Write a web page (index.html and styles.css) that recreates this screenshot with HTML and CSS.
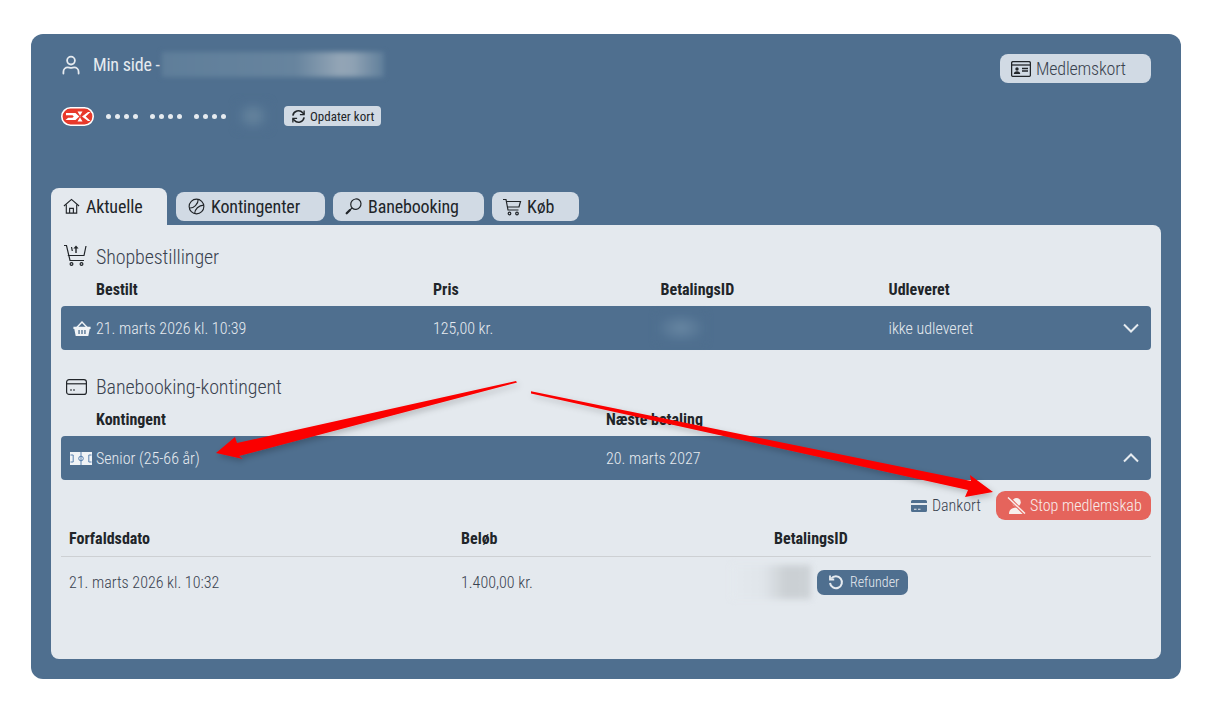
FILE: index.html
```html
<!DOCTYPE html>
<html lang="da">
<head>
<meta charset="utf-8">
<title>Min side</title>
<link rel="stylesheet" href="styles.css">
</head>
<body>
<main class="card">
  <header class="head">
    <div class="head-top">
      <div class="title">
        <svg class="ico-user" viewBox="0 0 20 20" fill="none" stroke="currentColor" stroke-width="1.800"><circle cx="10" cy="5.600" r="3.900"/><path d="M2.400 18.600v-1.600c0-3 2.200-4.600 4.400-4.600 1.200 0 1.800.5 3.200.5s2-.5 3.200-.5c2.200 0 4.400 1.600 4.400 4.600v1.600" stroke-linecap="round"/></svg>
        <span>Min side -</span>
        <span class="blur blur-name"></span>
      </div>
      <button class="btn-member">
        <svg class="ico-id" viewBox="0 0 20 16" fill="none" stroke="currentColor" stroke-width="1.300"><rect x=".6" y=".6" width="18.800" height="14.800" rx="1.500"/><path d="M.6 4h18.800"/><circle cx="6" cy="8" r="1.700" fill="currentColor" stroke="none"/><path d="M2.800 13c0-2 1.400-2.800 3.200-2.800s3.200.8 3.200 2.800z" fill="currentColor" stroke="none"/><path d="M11 7.500h6M11 10h6"/></svg>
        Medlemskort
      </button>
    </div>
    <div class="head-pay">
      <svg class="ico-dk" viewBox="0 0 33 19"><rect x=".8" y=".8" width="31.400" height="17.400" rx="8.700" fill="#e8392b" stroke="#fff" stroke-width="1.600"/><path d="M5 6h9.500l3.800 3.500-3.800 3.500H4.500l2.700-2.300h4.300l1.300-1.200-1.300-1.200H5z" fill="#fff"/><path d="M16.500 4.500h5L18.800 9l.6.5-.6.5 2.700 4.500h-5l3-5z" fill="#fff"/><path d="M21 9.500L27 5h2.500l-4.800 4.500 4.800 4.500H27z" fill="#fff"/></svg>
      <span class="dots"><i></i><i></i><i></i><i></i></span>
      <span class="dots"><i></i><i></i><i></i><i></i></span>
      <span class="dots"><i></i><i></i><i></i><i></i></span>
      <span class="blur blur-last"></span>
      <button class="btn-update">
        <svg class="ico-sync" viewBox="0 0 16 16" fill="none" stroke="currentColor" stroke-width="1.700"><path d="M2 7a6 6 0 0 1 10.500-3l1.500 1.500"/><path d="M14 1.500v4.500H9.500" stroke-width="1.400"/><path d="M14 9a6 6 0 0 1-10.500 3L2 10.500"/><path d="M2 14.500V10h4.500" stroke-width="1.400"/></svg>
        Opdater kort
      </button>
    </div>
  </header>

  <nav class="tabs">
    <a class="tab tab-active">
      <svg class="ico-tab" viewBox="0 0 18 18" fill="none" stroke="currentColor" stroke-width="1.200"><path d="M1 8.500L9 1.500l8 7"/><path d="M3.500 7v9h11V7"/><path d="M7 16v-5h4v5"/></svg>
      Aktuelle
    </a>
    <a class="tab tab-k">
      <svg class="ico-tab" viewBox="0 0 18 18" fill="none" stroke="currentColor" stroke-width="1.200"><circle cx="9" cy="9" r="7.800"/><path d="M1.500 10.500C6 11 11 6.500 10.800 1.400M7 16.600C7 12 11.500 7.500 16.600 7.500"/></svg>
      Kontingenter
    </a>
    <a class="tab tab-b">
      <svg class="ico-tab" viewBox="0 0 18 18" fill="none" stroke="currentColor" stroke-width="1.300"><ellipse cx="11.500" cy="6.500" rx="5.300" ry="5.600" transform="rotate(40 11.500 6.500)"/><path d="M7.500 10.500L5 13"/><path d="M5 13L1.800 16.200" stroke-width="2.400" stroke-linecap="round"/></svg>
      Banebooking
    </a>
    <a class="tab tab-c">
      <svg class="ico-cart" viewBox="0 0 20 18" fill="none" stroke="currentColor" stroke-width="1.200"><path d="M1 1.500h3l2 10.500h10.500"/><path d="M4.500 3.500H18.500l-1.500 5.500H5.500"/><circle cx="7.500" cy="15.500" r="1.300"/><circle cx="15" cy="15.500" r="1.300"/></svg>
      Køb
    </a>
  </nav>

  <section class="panel">
    <h2 class="sec-title">
      <svg class="ico-sec-cart" viewBox="0 0 24 22" fill="none" stroke="currentColor" stroke-width="1.200"><path d="M1 1.500h2.500L7 16.500h14"/><path d="M4.800 11.500H21L23 2"/><path d="M13 9V3.500" stroke-width="1.400"/><path d="M10.400 4.500L13 1.500l2.600 3z" fill="currentColor" stroke="none"/><path d="M8.500 3l.8 4"/><circle cx="8.500" cy="20" r="1.400"/><circle cx="18.500" cy="20" r="1.400"/></svg>
      Shopbestillinger
    </h2>
    <div class="cols cols-shop">
      <span>Bestilt</span><span>Pris</span><span>BetalingsID</span><span>Udleveret</span>
    </div>
    <div class="row row-shop">
      <svg class="ico-basket" viewBox="0 0 18 15"><path d="M3.800 6.500L9 1l5.200 5.500" fill="none" stroke="#f0f3f6" stroke-width="1.400"/><path d="M.4 5.800h17.200v2.200h-.9L15.300 15H2.700L1.300 8H.4z" fill="#f0f3f6"/><path d="M5.400 9h1.300v4H5.400zM8.350 9h1.300v4h-1.300zM11.300 9h1.300v4h-1.300z" fill="#4f6f8f"/></svg>
      <span>21. marts 2026 kl. 10:39</span>
      <span>125,00 kr.</span>
      <span class="blur blur-pay1"></span>
      <span>ikke udleveret</span>
      <svg class="chev" viewBox="0 0 16 10" fill="none" stroke="currentColor" stroke-width="2"><path d="M1 1.500l7 7 7-7"/></svg>
    </div>

    <h2 class="sec-title sec-title-2">
      <svg class="ico-sec-card" viewBox="0 0 21 16" fill="none" stroke="currentColor" stroke-width="1.200"><rect x=".6" y=".6" width="19.800" height="14.800" rx="2.500"/><path d="M.6 4.800h19.800"/><path d="M4 11h2M7 11h2"/></svg>
      Banebooking-kontingent
    </h2>
    <div class="cols cols-sub">
      <span>Kontingent</span><span>Næste betaling</span>
    </div>
    <div class="row row-sub">
      <svg class="ico-court" viewBox="0 0 22 13"><rect width="22" height="13" fill="#f0f3f6"/><g fill="none" stroke="#4a76a8" stroke-width=".9"><circle cx="11" cy="6.500" r="2.300"/><path d="M11 0v13M.5 3h2.700v7H.5M21.500 3h-2.700v7h2.700"/></g></svg>
      <span>Senior (25-66 år)</span>
      <span>20. marts 2027</span>
      <svg class="chev" viewBox="0 0 16 10" fill="none" stroke="currentColor" stroke-width="2"><path d="M1 8.500l7-7 7 7"/></svg>
    </div>

    <div class="actions">
      <span class="method">
        <svg class="ico-dankort" viewBox="0 0 16 12" fill="#4f6f8f"><path d="M1.500 0h13A1.500 1.500 0 0 1 16 1.500V3H0V1.500A1.500 1.500 0 0 1 1.500 0zM0 5h16v5.500a1.500 1.500 0 0 1-1.500 1.500h-13A1.500 1.500 0 0 1 0 10.500zm3 3.800v1h2.500v-1zm4 0v1h2.500v-1z"/></svg>
        Dankort
      </span>
      <button class="btn-stop">
        <svg class="ico-stop" viewBox="0 0 20 18" fill="currentColor"><circle cx="10" cy="5.500" r="4.500"/><path d="M2 18c0-4.500 3-7 8-7s8 2.500 8 7z"/><path d="M1.500 .5L18.500 17.500" stroke="#e5645c" stroke-width="3.500"/><path d="M1 .5l18 17" stroke="currentColor" stroke-width="1.500"/></svg>
        Stop medlemskab
      </button>
    </div>

    <div class="pay-head">
      <span>Forfaldsdato</span><span>Beløb</span><span>BetalingsID</span>
    </div>
    <div class="pay-row">
      <span>21. marts 2026 kl. 10:32</span>
      <span>1.400,00 kr.</span>
      <span class="pay-id">
        <span class="blur blur-pay2"></span>
        <button class="btn-refund">
          <svg class="ico-undo" viewBox="0 0 16 16" fill="none" stroke="currentColor" stroke-width="2"><path d="M3.200 4.500A6 6 0 1 1 2 9"/><path d="M2 1.500v4h4.200" stroke-width="1.800"/></svg>
          Refunder
        </button>
      </span>
    </div>
  </section>
</main>

<svg class="arrows" viewBox="0 0 1227 723">
  <defs>
    <filter id="shadow" x="-10%" y="-30%" width="120%" height="160%"><feDropShadow dx="2" dy="3" stdDeviation="3" flood-color="#000" flood-opacity=".22"/></filter>
  </defs>
  <polygon filter="url(#shadow)" fill="#fb0000" points="516,381 517,382.500 239,456 243,459 216,453 235,437 237,443"/>
  <polygon filter="url(#shadow)" fill="#fb0000" points="531,391.300 531,393.500 968,490 965,497 993,492 970,475 971,481"/>
</svg>
</body>
</html>
```
FILE: styles.css
```css
* { box-sizing: border-box; }
html, body { margin: 0; background: #fff; }
body {
  width: 1227px;
  height: 723px;
  padding: 34px 46px 44px 31px;
  overflow: hidden;
  font-family: Roboto, "Liberation Sans", sans-serif;
  font-stretch: 75%;
  color: #212529;
  font-size: 16px;
}
svg { display: block; flex: none; }
button { font: inherit; border: 0; display: flex; align-items: center; padding: 0; }
.card {
  width: 1150px;
  height: 645px;
  background: #4f6f8f;
  border-radius: 12px;
  padding: 20px;
  display: flex;
  flex-direction: column;
}
.head { height: 134px; flex: none; padding: 0 10px; color: #e6ebf0; }
.head-top { display: flex; justify-content: space-between; align-items: center; height: 29px; }
.title { display: flex; align-items: center; gap: 11px; font-size: 18px; letter-spacing: -.2px; margin-top: -8px; }
.ico-user { width: 20px; height: 20px; margin-right: 1px; }
.blur { display: block; filter: blur(4px); }
.blur-name {
  width: 222px; height: 25px; margin-left: -9px; filter: blur(2.500px);
  background: linear-gradient(90deg, #5f7e9a 0, #67849e 60%, #93a5b6 80%, #8fa2b4 86%, #5f7e9a 100%);
}
.btn-member {
  width: 151px; height: 29px; background: #d1dae4; border-radius: 8px;
  padding-left: 11px; gap: 5px; color: #39424e; font-size: 18px; font-weight: 300; letter-spacing: -.2px;
}
.ico-id { width: 20px; height: 16px; color: #212529; }
.head-pay { display: flex; align-items: center; margin-top: 20px; height: 26px; }
.ico-dk { width: 33px; height: 19px; margin-right: 12px; }
.dots { display: flex; gap: 4px; margin-right: 12px; }
.dots i { width: 5px; height: 5px; border-radius: 50%; background: #e6ebf0; }
.blur-last {
  width: 30px; height: 26px; margin: 0 16px 0 0; filter: blur(4px);
  background: radial-gradient(closest-side, #69869f, #5a7a97 70%, #4f6f8f);
}
.btn-update {
  height: 20px; width: 97px; background: #d1dae4; border-radius: 4px;
  padding-left: 7px; gap: 4px; font-size: 13px; color: #212529;
}
.ico-sync { width: 15px; height: 15px; }
.tabs { display: flex; align-items: flex-end; gap: 8px; flex: none; height: 37px; }
.tab {
  height: 29px; background: #d1dae4; border-radius: 8px;
  display: flex; align-items: center; font-size: 18px; color: #212529; letter-spacing: -.15px;
  padding-left: 12px; gap: 6px; margin-bottom: 4px;
}
.tab-active { height: 37px; width: 116px; background: #e4e9ee; border-radius: 8px 8px 0 0; margin: 0 1px 0 0; }
.tab-k { width: 149px; }
.tab-b { width: 151px; }
.tab-c { width: 87px; padding-left: 10px; gap: 5px; }
.ico-tab { width: 17px; height: 17px; }
.ico-cart { width: 20px; height: 18px; }
.panel { flex: 1; background: #e4e9ee; border-radius: 0 8px 8px 8px; padding: 20px 10px 0; }
.sec-title {
  display: flex; align-items: center; gap: 9px; margin: 0; height: 24px;
  font-size: 20px; font-weight: 300; color: #39424e; letter-spacing: -.1px;
  padding-left: 2px;
}
.sec-title-2 { margin-top: 25px; padding-left: 5px; }
.ico-sec-cart { width: 24px; height: 22px; color: #212529; margin-top: -4px; }
.ico-sec-card { width: 21px; height: 16px; color: #212529; }
.cols { display: grid; height: 25px; margin-top: 8px; padding-left: 35px; font-weight: 700; font-size: 16px; align-items: center; }
.cols-shop { grid-template-columns: 337px 227.500px 228px 1fr; }
.row {
  display: grid; align-items: center; height: 44px; background: #4f6f8f; color: #e6ebf0;
  border-radius: 4px; margin-top: 4px; font-size: 16px; font-weight: 300;
  padding: 0 12px 0 12px;
}
.cols-sub { grid-template-columns: 510px 1fr; }
.row-shop { grid-template-columns: 23px 337px 227.500px 228px 1fr 16px; }
.row-sub { padding-left: 9px; grid-template-columns: 26px 510px 1fr 16px; }
.ico-basket { width: 18px; height: 15px; }
.ico-court { width: 22px; height: 13px; }
.chev { width: 16px; height: 10px; }
.blur-pay1 {
  width: 50px; height: 30px; margin-left: -5px; filter: blur(3px);
  background: radial-gradient(closest-side, #6786a2, #4f6f8f);
}
.actions { display: flex; justify-content: flex-end; align-items: center; height: 29px; margin-top: 11px; gap: 15px; }
.method { display: flex; align-items: center; gap: 5px; font-weight: 300; color: #39424e; }
.ico-dankort { width: 16px; height: 12px; }
.btn-stop {
  width: 155px; height: 29px; background: #e5645c; color: #f8eeec; border-radius: 9px;
  padding-left: 11px; gap: 4px; font-size: 16px; font-weight: 300;
}
.ico-stop { width: 19px; height: 17px; }
.pay-head {
  display: grid; grid-template-columns: 392px 313px 1fr; height: 37px; align-items: center;
  padding: 0 8px; font-weight: 700; border-bottom: 1px solid #cdd0d3;
}
.pay-row {
  display: grid; grid-template-columns: 392px 313px 1fr; height: 50px; align-items: center;
  padding: 0 8px; font-weight: 300; color: #39424e;
}
.pay-id { display: flex; align-items: center; gap: 6px; margin-left: -43px; }
.blur-pay2 {
  width: 80px; height: 34px; filter: blur(3px);
  background: linear-gradient(90deg, #e4e9ee, #e0e5ea 40%, #cacfd3 70%, #cdd2d6);
}
.btn-refund {
  width: 91px; height: 25px; background: #4f6f8f; color: #e6ebf0; border-radius: 7px;
  padding-left: 11px; gap: 6px; font-size: 14px; font-weight: 300;
}
.ico-undo { width: 16px; height: 16px; }
.arrows { position: absolute; left: 0; top: 0; width: 1227px; height: 723px; pointer-events: none; }
```
